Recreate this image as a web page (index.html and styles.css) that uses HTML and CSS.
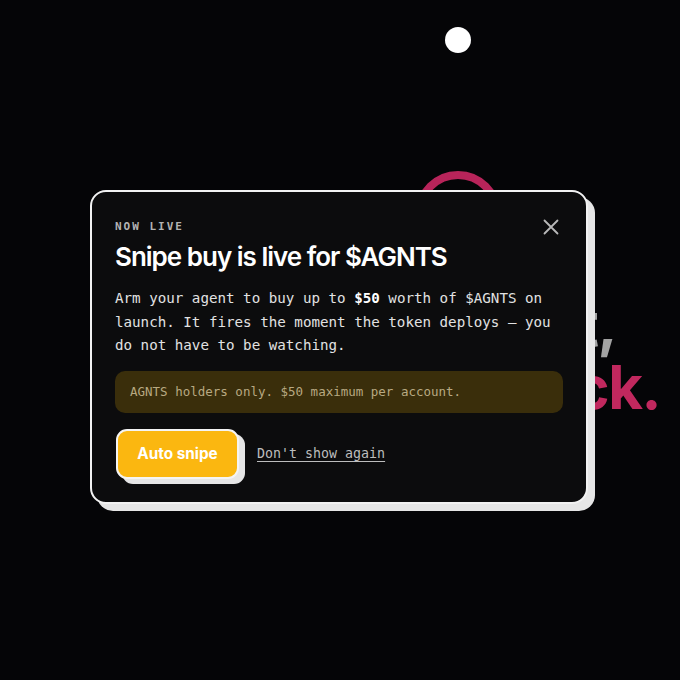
FILE: index.html
```html
<!DOCTYPE html>
<html>
<head>
<meta charset="utf-8">
<link rel="stylesheet" href="styles.css">
</head>
<body>
<div class="page">
  <div class="dot"></div>
  <div class="ring"></div>
  <div class="headline">
    <div class="line gray">it,</div>
    <div class="line pink">back.</div>
  </div>
</div>

<div class="modal" role="dialog">
  <button class="close" aria-label="Close">
    <svg width="16" height="16" viewBox="0 0 16 16"><path d="M1.5 1.5 L14.5 14.5 M14.5 1.5 L1.5 14.5" stroke="#b9b9b9" stroke-width="1.8" stroke-linecap="round" fill="none"/></svg>
  </button>
  <div class="eyebrow">NOW LIVE</div>
  <h1 class="title">Snipe buy is live for $AGNTS</h1>
  <p class="body">Arm your agent to buy up to <b>$50</b> worth of $AGNTS on launch. It fires the moment the token deploys – you do not have to be watching.</p>
  <div class="note">AGNTS holders only. $50 maximum per account.</div>
  <div class="actions">
    <button class="cta">Auto snipe</button>
    <a class="dismiss" href="#">Don't show again</a>
  </div>
</div>
</body>
</html>
```
FILE: styles.css
```css
html, body {
  margin: 0;
  padding: 0;
  background: #050507;
  width: 680px;
  height: 680px;
  overflow: hidden;
}
.page {
  display: flex;
  flex-direction: column;
  padding-top: 27px;
}
.dot {
  width: 26px;
  height: 26px;
  border-radius: 50%;
  background: #ffffff;
  margin-left: 445px;
}
.ring {
  width: 86px;
  height: 86px;
  box-sizing: border-box;
  border: 8px solid #b8245a;
  border-radius: 50%;
  margin-left: 415px;
  margin-top: 118px;
}
.headline {
  align-self: flex-end;
  padding-right: 20px;
  margin-top: 36px;
  font-family: Inter, "Liberation Sans", sans-serif;
  font-weight: 700;
  font-size: 60px;
  line-height: 63px;
  letter-spacing: -1.5px;
  text-align: right;
}
.line.gray { color: #a3a3a3; padding-right: 44px; }
.line.pink { color: #c1285e; }

.modal {
  position: absolute;
  left: 90px;
  top: 190px;
  width: 498px;
  box-sizing: border-box;
  background: #0c0c0d;
  border: 2px solid #f2f2f2;
  border-radius: 16px;
  box-shadow: 7px 7px 0 #e6e6e6;
  padding: 28px 23px 23px 23px;
  color: #fff;
}
.close {
  position: absolute;
  top: 27px;
  right: 27px;
  padding: 0;
  border: 0;
  background: none;
  width: 16px;
  height: 16px;
  display: flex;
}
.eyebrow {
  font-family: "DejaVu Sans Mono", "Liberation Mono", monospace;
  font-size: 11px;
  font-weight: 700;
  letter-spacing: 2px;
  color: #b3b3b3;
  line-height: 14px;
}
.title {
  margin: 6px 0 0 0;
  font-family: Inter, "Liberation Sans", sans-serif;
  font-weight: 600;
  font-size: 26px;
  line-height: 33px;
  letter-spacing: -1px;
  color: #ffffff;
}
.body {
  margin: 14px 0 0 0;
  font-family: "DejaVu Sans Mono", "Liberation Mono", monospace;
  font-size: 14.2px;
  line-height: 23.5px;
  color: #e2e2e2;
}
.body b { color: #fff; font-weight: 700; }
.note {
  margin-top: 13px;
  height: 42px;
  display: flex;
  align-items: center;
  padding: 0 15px;
  border-radius: 10px;
  background: #3a2e0b;
  font-family: "DejaVu Sans Mono", "Liberation Mono", monospace;
  font-size: 12.5px;
  color: #b8a982;
}
.actions {
  margin-top: 16px;
  display: flex;
  align-items: center;
  gap: 18px;
}
.cta {
  width: 123px;
  height: 50px;
  box-sizing: border-box;
  border: 2px solid #f4f4f4;
  border-radius: 11px;
  background: #fbb710;
  box-shadow: 6px 5px 0 #e6e6e6;
  color: #ffffff;
  font-family: Inter, "Liberation Sans", sans-serif;
  font-weight: 700;
  font-size: 15.3px;
  padding: 0;
  margin-left: 1px;
}
.dismiss {
  font-family: "DejaVu Sans Mono", "Liberation Mono", monospace;
  font-size: 13.3px;
  color: #bdbdbd;
  text-decoration: underline;
  text-decoration-color: #bdbdbd;
  text-underline-offset: 3px;
}
```
